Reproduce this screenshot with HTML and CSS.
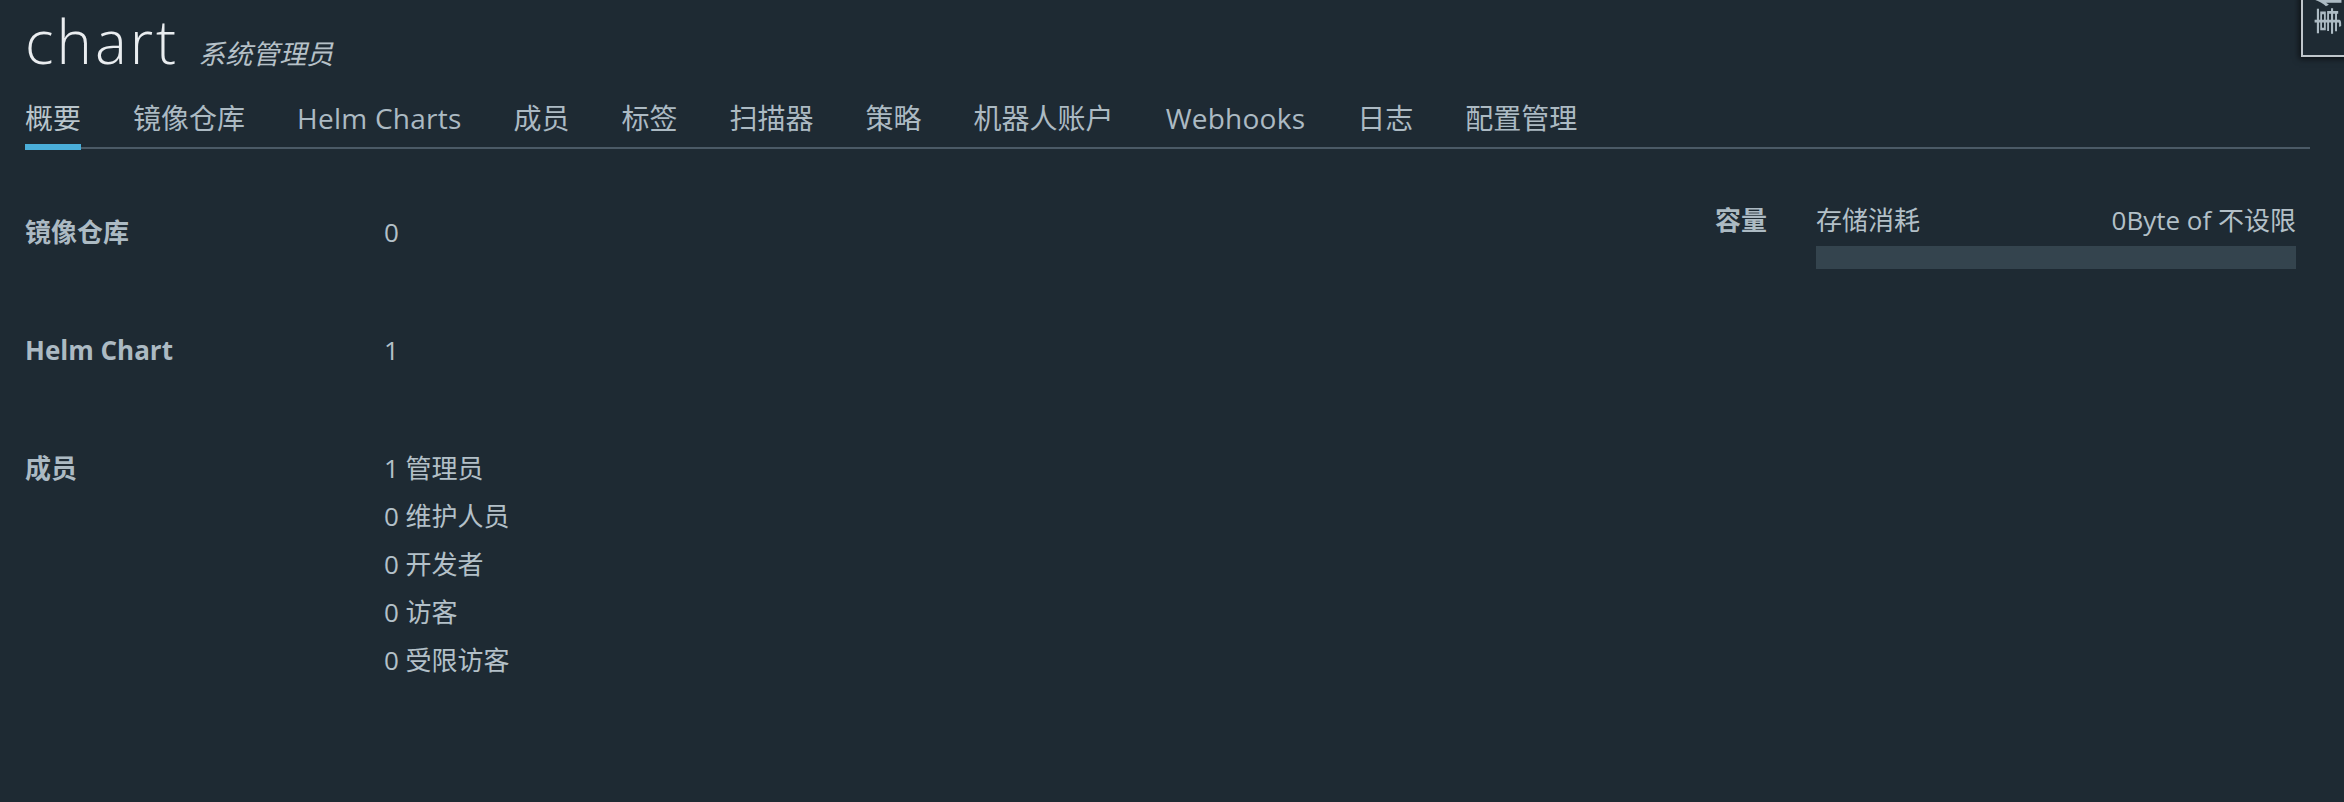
FILE: index.html
```html
<!DOCTYPE html>
<html lang="zh-CN">
<head>
<meta charset="utf-8">
<title>chart</title>
<link rel="stylesheet" href="styles.css">
</head>
<body>
<div class="page">
  <header class="title-row">
    <h1 class="title">chart</h1>
    <span class="role">系统管理员</span>
  </header>
  <nav class="tabs">
    <ul class="tab-list">
      <li><a class="tab active">概要</a></li>
      <li><a class="tab">镜像仓库</a></li>
      <li><a class="tab tab-latin">Helm Charts</a></li>
      <li><a class="tab">成员</a></li>
      <li><a class="tab">标签</a></li>
      <li><a class="tab">扫描器</a></li>
      <li><a class="tab">策略</a></li>
      <li><a class="tab">机器人账户</a></li>
      <li><a class="tab tab-latin">Webhooks</a></li>
      <li><a class="tab">日志</a></li>
      <li><a class="tab">配置管理</a></li>
    </ul>
  </nav>
  <main class="summary">
    <section class="stats">
      <div class="stat">
        <div class="stat-label">镜像仓库</div>
        <div class="stat-value">0</div>
      </div>
      <div class="stat">
        <div class="stat-label">Helm Chart</div>
        <div class="stat-value">1</div>
      </div>
      <div class="stat">
        <div class="stat-label">成员</div>
        <div class="stat-value">
          <div>1 管理员</div>
          <div>0 维护人员</div>
          <div>0 开发者</div>
          <div>0 访客</div>
          <div>0 受限访客</div>
        </div>
      </div>
    </section>
    <section class="quota">
      <div class="quota-label">容量</div>
      <div class="usage">
        <div class="usage-head">
          <span>存储消耗</span>
          <span>0Byte of 不设限</span>
        </div>
        <div class="bar"></div>
      </div>
    </section>
  </main>
</div>
<aside class="side-tab"><span class="side-text">事件</span></aside>
</body>
</html>
```

FILE: styles.css
```css
html, body {
  margin: 0;
  padding: 0;
}

body {
  background: #1e2a33;
  color: #acbac3;
  font-family: "Open Sans", "Noto Sans CJK SC", sans-serif;
  overflow: hidden;
}

.page {
  padding: 0 34px 0 25px;
}

.title-row {
  display: flex;
  align-items: baseline;
  padding-top: 11px;
}

.title {
  margin: 0;
  font-size: 60px;
  line-height: 60px;
  font-weight: 300;
  letter-spacing: 3px;
  color: #eaedf0;
}

.role {
  margin-left: 19px;
  font-size: 27px;
  line-height: 27px;
  font-style: italic;
  color: #b6c1c8;
}

.tab-list {
  display: flex;
  gap: 52px;
  margin: 27px 0 0;
  padding: 0;
  list-style: none;
  border-bottom: 2px solid #4b5a66;
}

.tab {
  display: block;
  font-size: 28px;
  line-height: 40px;
  padding-bottom: 6px;
  border-bottom: 6px solid transparent;
  margin-bottom: -3px;
  color: #acbac3;
  text-decoration: none;
  white-space: nowrap;
}

.tab-latin {
  letter-spacing: 0.25px;
}

.tab.active {
  border-bottom-color: #4aaed9;
  color: #b9c5cc;
}

.summary {
  display: flex;
  justify-content: space-between;
  align-items: flex-start;
  padding-top: 47px;
}

.stats {
  margin-top: 12px;
}

.stat {
  display: flex;
  margin-bottom: 70px;
}

.stat-label {
  width: 359px;
  font-size: 26px;
  line-height: 48px;
  font-weight: 700;
  color: #acbac3;
}

.stat-value {
  font-size: 26px;
  line-height: 48px;
  color: #b3c0c8;
}

.quota {
  display: flex;
  margin-right: 14px;
}

.quota-label {
  width: 101px;
  font-size: 26px;
  line-height: 48px;
  font-weight: 700;
  color: #acbac3;
}

.usage {
  width: 480px;
}

.usage-head {
  display: flex;
  justify-content: space-between;
  font-size: 26px;
  line-height: 48px;
  color: #b3c0c8;
}

.bar {
  height: 23px;
  margin-top: 2px;
  background: #34444e;
}

.side-tab {
  position: fixed;
  top: -62px;
  right: -12px;
  width: 55px;
  height: 119px;
  box-sizing: border-box;
  border: 2px solid #bfc6cb;
  background: #1e2a33;
  box-shadow: -2px 2px 6px rgba(0, 0, 0, 0.6);
  display: flex;
  flex-direction: column;
  justify-content: flex-end;
  align-items: flex-start;
  padding: 0 0 20px 11px;
}

.side-text {
  writing-mode: vertical-rl;
  text-orientation: sideways;
  transform: rotate(180deg);
  font-size: 28px;
  line-height: 28px;
  font-weight: 500;
  color: #acbac3;
}
```
